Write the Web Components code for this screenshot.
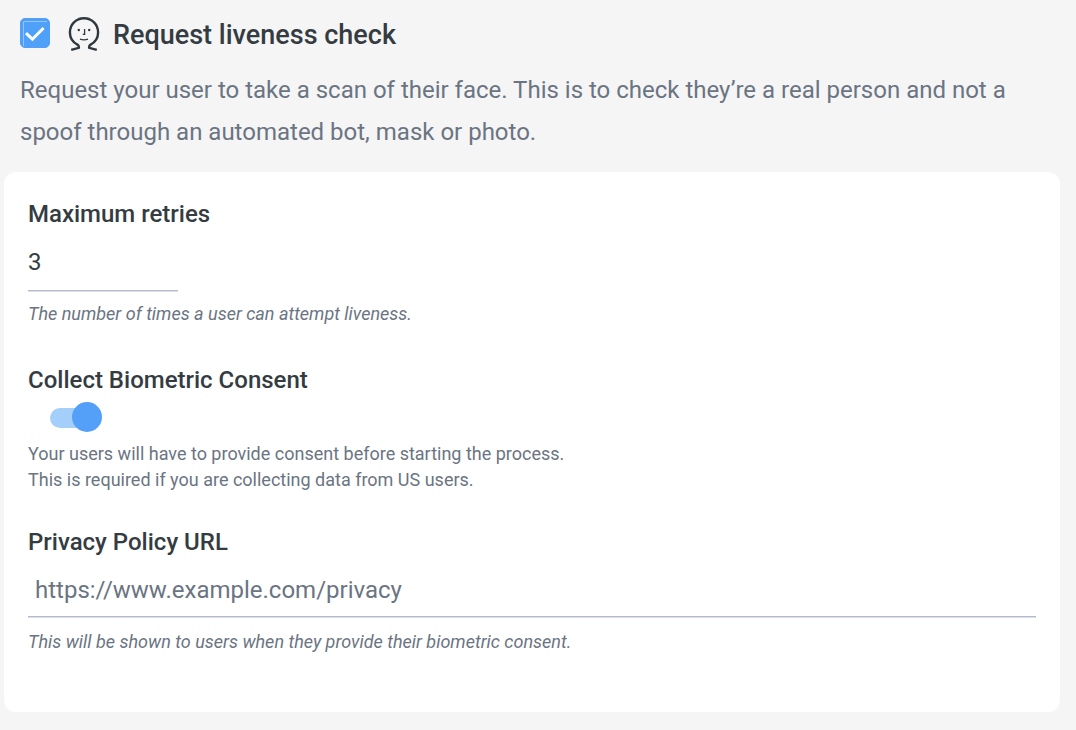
<!DOCTYPE html>
<html lang="en">
<head>
<meta charset="utf-8">
<meta name="viewport" content="width=device-width, initial-scale=1">
<title>Liveness check settings</title>
<style>
  body {
    margin: 0;
    background: #f5f5f5;
    color: #343c42;
    font-family: Roboto, sans-serif;
    font-size: 24px;
    --muted: #6b7482;
    --accent: #549ff7;
    --accent-soft: #a4cffa;
    --rule: #b5bacf;
    --rule-soft: #dcdde6;
  }
</style>
</head>
<body>
<liveness-settings>
  <check-heading slot="heading" label="Request liveness check"></check-heading>
  <span slot="description">Request your user to take a scan of their face. This is to check they’re a real person and not a spoof through an automated bot, mask or photo.</span>
  <text-field label="Maximum retries" value="3" type="text" size="short">The number of times a user can attempt liveness.</text-field>
  <toggle-field label="Collect Biometric Consent">Your users will have to provide consent before starting the process.<br>This is required if you are collecting data from US users.</toggle-field>
  <text-field label="Privacy Policy URL" placeholder="https://www.example.com/privacy" type="url" size="full">This will be shown to users when they provide their biometric consent.</text-field>
</liveness-settings>

<script>
  class LivenessSettings extends HTMLElement {
    constructor() {
      super();
      this.attachShadow({ mode: 'open' }).innerHTML = `
        <style>
          :host { display: block; padding: 16px 16px 16px 4px; }
          header { padding: 0 16px; }
          p { margin: 15px 0 19px; line-height: 42px; color: var(--muted); }
          section {
            display: flex; flex-direction: column; gap: 35px;
            padding: 28px 24px 57px; background: #fff; border-radius: 12px;
          }
        </style>
        <header>
          <slot name="heading"></slot>
          <p><slot name="description"></slot></p>
        </header>
        <section><slot></slot></section>`;
    }
  }

  class FaceIcon extends HTMLElement {
    constructor() {
      super();
      this.attachShadow({ mode: 'open' }).innerHTML = `
        <style>:host { display: block; } svg { display: block; }</style>
        <svg width="32" height="36" viewBox="0 0 32 36" fill="none" stroke="#30383d" aria-hidden="true">
          <path stroke-width="2.4" d="M3.2 33.8 L10.8 31.8 Q11.2 29.8 9.4 28.6 C4.4 25.8 1.9 21.6 1.9 16.4 C1.9 8.2 8 2.3 16 2.3 S30.1 8.2 30.1 16.4 C30.1 21.6 27.6 25.8 22.6 28.6 Q20.8 29.8 21.2 31.8 L28.8 33.8"/>
          <path stroke-width="1.3" d="M16.6 13 V18.4 H14.8 M12 23.2 C14.2 23.9 17.8 23.9 20 23.2"/>
          <circle cx="10.8" cy="14" r="1.2" fill="#30383d" stroke="none"/>
          <circle cx="21.2" cy="14" r="1.2" fill="#30383d" stroke="none"/>
        </svg>`;
    }
  }

  class CheckHeading extends HTMLElement {
    connectedCallback() {
      this.attachShadow({ mode: 'open' }).innerHTML = `
        <style>
          :host { display: flex; align-items: flex-start; }
          .box { display: grid; margin: 2px 18px 0 0; }
          input, svg { grid-area: 1 / 1; width: 30px; height: 30px; margin: 0; }
          input { appearance: none; border: 1px solid var(--accent); border-radius: 5px; background: #fff; }
          input:checked { background: #4fa0f8; }
          input:not(:checked) + svg { visibility: hidden; }
          svg { pointer-events: none; }
          h1 { margin: 0 0 0 13px; font-size: 27px; line-height: 38px; font-weight: 500; }
        </style>
        <span class="box">
          <input type="checkbox" id="check" checked>
          <svg viewBox="0 0 30 30" fill="none" aria-hidden="true">
            <path d="M3.5 28 V3.5 H27" stroke="#93c5fb" stroke-width="1"/>
            <path d="M6 15.2 L12.4 21.2 L23.6 10" stroke="#fff" stroke-width="3"/>
          </svg>
        </span>
        <face-icon></face-icon>
        <h1><label for="check"></label></h1>`;
      this.shadowRoot.querySelector('label').textContent = this.getAttribute('label');
    }
  }

  class TextField extends HTMLElement {
    connectedCallback() {
      this.attachShadow({ mode: 'open' }).innerHTML = `
        <style>
          :host { display: flex; flex-direction: column; align-items: flex-start; }
          :host([size="short"]) { padding-bottom: 4px; }
          label { font-weight: 500; line-height: 28px; }
          input {
            box-sizing: border-box; width: 150px; height: 57px; margin: 6px 0 10px; padding: 0;
            border: 0; border-bottom: 1px solid var(--rule); border-radius: 0;
            box-shadow: 0 1px var(--rule-soft);
            background: none; color: inherit; font: inherit; outline: 0;
          }
          :host([size="full"]) input { width: 100%; height: 53px; margin: 8px 0 12px; padding: 0 7px; }
          input::placeholder { color: var(--muted); opacity: 1; }
          small { font-size: 18px; line-height: 26px; font-style: italic; color: var(--muted); }
        </style>
        <label for="field"></label>
        <input id="field" aria-describedby="hint">
        <small id="hint"><slot></slot></small>`;
      this.shadowRoot.querySelector('label').textContent = this.getAttribute('label');
      const input = this.shadowRoot.querySelector('input');
      input.type = this.getAttribute('type');
      input.value = this.getAttribute('value') || '';
      input.placeholder = this.getAttribute('placeholder') || '';
    }
  }

  class ToggleField extends HTMLElement {
    connectedCallback() {
      this.attachShadow({ mode: 'open' }).innerHTML = `
        <style>
          :host { display: flex; flex-direction: column; align-items: flex-start; }
          label { font-weight: 500; line-height: 28px; }
          input {
            appearance: none; display: flex; align-items: center;
            width: 52px; height: 30px; margin: 8px 22px 9px;
            background: linear-gradient(#d5d8dd, #d5d8dd) center / 100% 20px no-repeat;
            border-radius: 15px;
          }
          input::before { content: ""; flex: none; z-index: 1; width: 30px; height: 30px; border-radius: 50%; background: #9aa1ab; }
          input:checked { background: none; justify-content: flex-end; }
          input:checked::before { background: var(--accent); }
          input:checked::after {
            content: ""; order: -1; width: 42px; height: 20px; margin-right: -20px; margin-top: 2px; flex: none;
            border-radius: 10px; background: var(--accent-soft);
          }
          small { font-size: 18px; line-height: 26px; color: var(--muted); }
        </style>
        <label for="toggle"></label>
        <input type="checkbox" role="switch" id="toggle" checked aria-describedby="hint">
        <small id="hint"><slot></slot></small>`;
      this.shadowRoot.querySelector('label').textContent = this.getAttribute('label');
    }
  }

  customElements.define('face-icon', FaceIcon);
  customElements.define('check-heading', CheckHeading);
  customElements.define('text-field', TextField);
  customElements.define('toggle-field', ToggleField);
  customElements.define('liveness-settings', LivenessSettings);
</script>
</body>
</html>
